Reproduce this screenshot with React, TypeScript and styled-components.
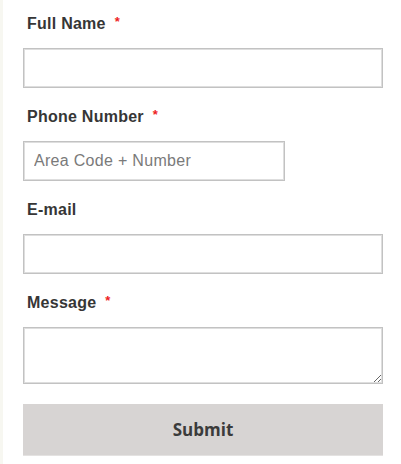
import React from 'react'
import styled, { createGlobalStyle } from 'styled-components'

const GlobalStyle = createGlobalStyle`
  html, body {
    margin: 0;
    padding: 0;
    background: #ffffff;
  }
`

const Page = styled.div`
  min-height: 464px;
  border-left: 3px solid #f7f7f1;
  box-sizing: border-box;
`

const Form = styled.form`
  display: flex;
  flex-direction: column;
  width: 360px;
  padding: 14px 0 0 20px;
`

const Field = styled.div`
  display: flex;
  flex-direction: column;
  margin-bottom: 19px;
`

const Label = styled.label`
  display: block;
  height: 18px;
  padding: 1px 0 0 4px;
  margin-bottom: 15px;
  font-family: Arial, 'Liberation Sans', sans-serif;
  font-size: 16px;
  line-height: 18px;
  font-weight: bold;
  letter-spacing: 0.25px;
  color: #363636;
`

const Required = styled.span`
  margin-left: 9px;
  color: #ee1c24;
  font-size: 13px;
  line-height: 0;
  vertical-align: 3px;
`

const TextInput = styled.input<{ $width?: number }>`
  box-sizing: border-box;
  width: ${(p) => (p.$width ? `${p.$width}px` : '100%')};
  height: 40px;
  margin: 0;
  padding: 0 10px;
  border: 1px solid #c2c2c2;
  box-shadow: inset 0 0 0 1px #dedede;
  border-radius: 0;
  font-family: Arial, 'Liberation Sans', sans-serif;
  font-size: 16px;
  letter-spacing: 0.3px;
  color: #333;
  outline: none;

  &::placeholder {
    color: #7a7a7a;
  }
`

const TextArea = styled.textarea`
  box-sizing: border-box;
  width: 100%;
  height: 57px;
  margin: 0;
  padding: 8px 10px;
  border: 1px solid #c2c2c2;
  box-shadow: inset 0 0 0 1px #dedede;
  border-radius: 0;
  font-family: Arial, 'Liberation Sans', sans-serif;
  font-size: 16px;
  outline: none;
  display: block;
`

const SubmitButton = styled.button`
  box-sizing: border-box;
  width: 100%;
  height: 52px;
  margin-top: 1px;
  border: none;
  border-bottom: 1px solid #e4e2e1;
  border-radius: 0;
  background: #d7d4d3;
  font-family: 'Open Sans', 'DejaVu Sans', sans-serif;
  font-size: 17px;
  font-weight: bold;
  color: #3b3b3b;
  cursor: pointer;
`

export default function App(): React.ReactElement {
  return (
    <Page>
      <GlobalStyle />
      <Form onSubmit={(e) => e.preventDefault()}>
        <Field>
          <Label>
            Full Name<Required>*</Required>
          </Label>
          <TextInput type="text" />
        </Field>
        <Field>
          <Label>
            Phone Number<Required>*</Required>
          </Label>
          <TextInput type="tel" $width={262} placeholder="Area Code + Number" />
        </Field>
        <Field>
          <Label>E-mail</Label>
          <TextInput type="email" />
        </Field>
        <Field>
          <Label>
            Message<Required>*</Required>
          </Label>
          <TextArea />
        </Field>
        <SubmitButton type="submit">Submit</SubmitButton>
      </Form>
    </Page>
  )
}
